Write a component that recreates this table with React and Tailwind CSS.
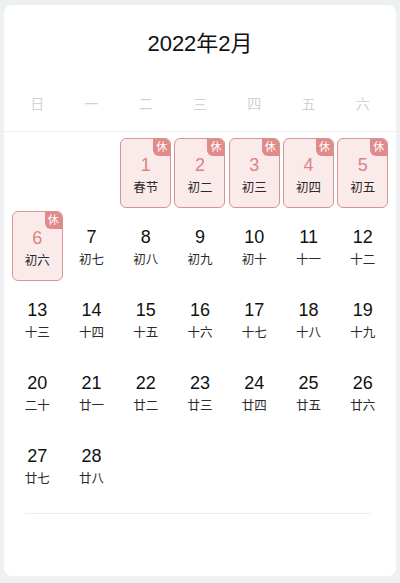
const WEEK = ['日', '一', '二', '三', '四', '五', '六']

const LUNAR = [
    '春节', '初二', '初三', '初四', '初五', '初六', '初七', '初八', '初九', '初十',
    '十一', '十二', '十三', '十四', '十五', '十六', '十七', '十八', '十九', '二十',
    '廿一', '廿二', '廿三', '廿四', '廿五', '廿六', '廿七', '廿八',
]

const FIRST_WEEKDAY = 2
const HOLIDAYS = [1, 2, 3, 4, 5, 6]

const DayCell = ({ day, lunar, rest }) => {
    if (rest) {
        return (
            <div className="relative w-[51px] h-[70px] mx-auto rounded-md border border-[#d69595] bg-[#fbeaea] flex flex-col items-center pt-[14px]">
                <span className="absolute top-0 right-0 w-[17px] h-[17px] rounded-tr-[5px] rounded-bl-md bg-[#e08a8a] text-white text-[11px] leading-[17px] text-center">
                    休
                </span>
                <span className="text-[18px] leading-6 text-[#d98585]">{day}</span>
                <span className="mt-[3px] text-[12.5px] leading-4 text-[#2a2a2a]">{lunar}</span>
            </div>
        )
    }
    return (
        <div className="w-[51px] h-[70px] mx-auto flex flex-col items-center pt-[14px]">
            <span className="text-[18px] leading-6 text-[#111]">{day}</span>
            <span className="mt-[3px] text-[12.5px] leading-4 text-[#2a2a2a]">{lunar}</span>
        </div>
    )
}

const App = () => {
    const cells = [
        ...Array(FIRST_WEEKDAY).fill(null),
        ...LUNAR.map((lunar, i) => ({ day: i + 1, lunar })),
    ]

    return (
        <div
            className="min-h-[583px] bg-[#eef1f1] px-1 pt-[5px] pb-[7px]"
            style={{ fontFamily: '"Liberation Sans", "Noto Sans CJK SC", sans-serif' }}
        >
            <div className="h-[571px] rounded-lg bg-white flex flex-col">
                {/* Title + weekdays */}
                <div className="border-b border-[#eef0f0] pt-[23px] pb-[17px]">
                    <h1 className="text-center text-[22px] leading-8 text-[#111]">2022年2月</h1>
                    <div className="mt-[34px] grid grid-cols-7 px-[6px]">
                        {WEEK.map((w) => (
                            <span key={w} className="text-center text-[14px] leading-5 text-[#d2d2d2]">
                                {w}
                            </span>
                        ))}
                    </div>
                </div>

                {/* Days */}
                <div className="grid grid-cols-7 gap-y-[3px] px-[6px] pt-[6px]">
                    {cells.map((c, i) =>
                        c ? (
                            <DayCell key={i} day={c.day} lunar={c.lunar} rest={HOLIDAYS.includes(c.day)} />
                        ) : (
                            <div key={i} className="h-[70px]" />
                        )
                    )}
                </div>

                <div className="mt-[13px] ml-[21px] mr-[25px] border-t border-[#eceeee]" />
            </div>
        </div>
    )
}

export default App
